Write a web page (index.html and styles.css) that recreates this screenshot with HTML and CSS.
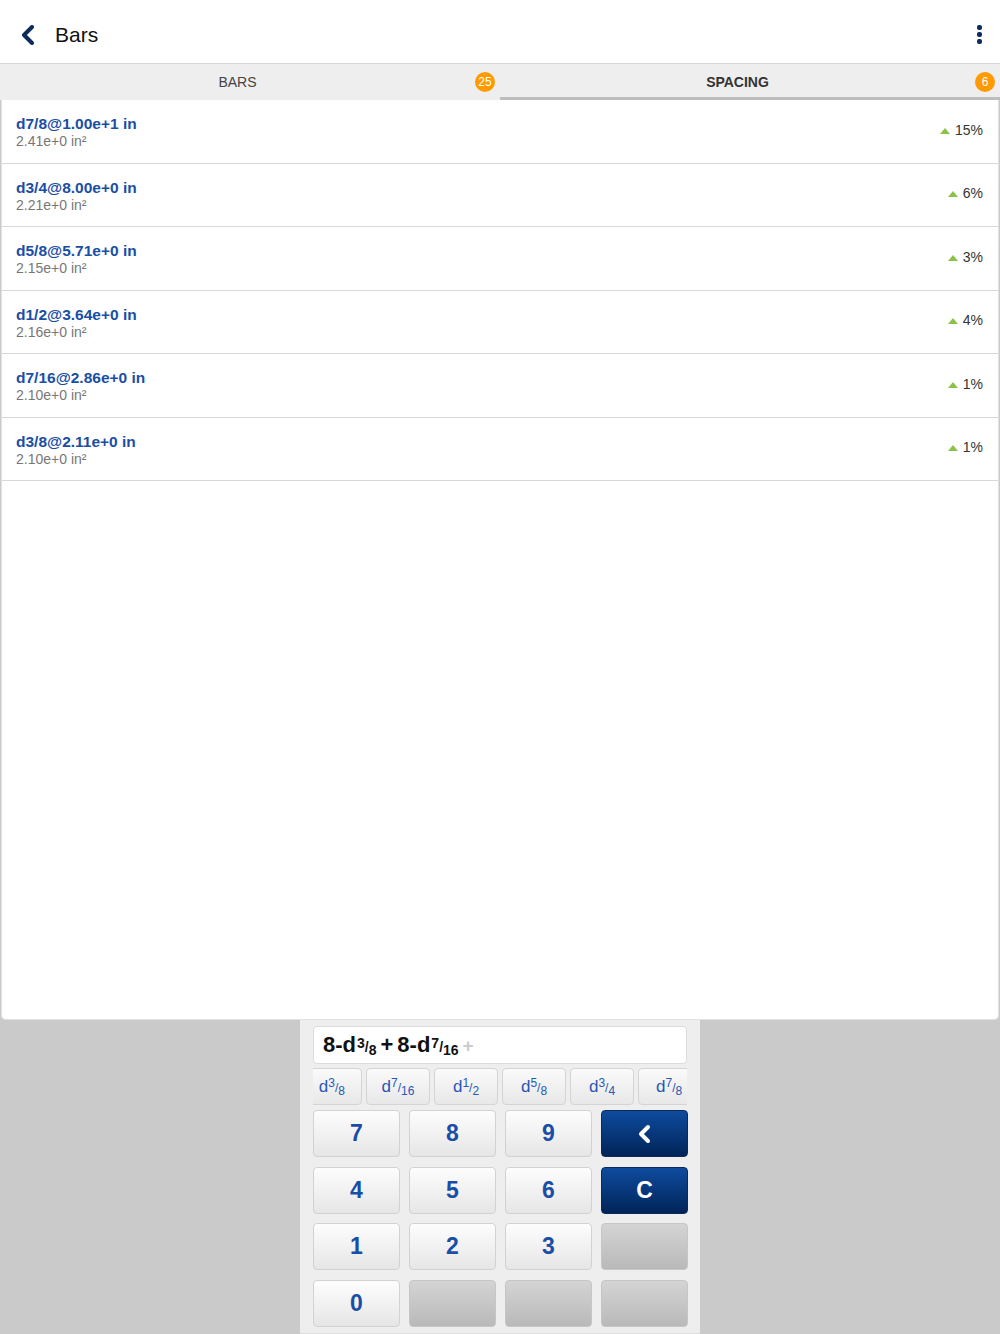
FILE: index.html
```html
<!DOCTYPE html>
<html lang="en">
<head>
    <meta charset="UTF-8">
    <title>Bars</title>
    <meta name="viewport" content="width=device-width, initial-scale=1.0">
    <link rel="stylesheet" href="styles.css">
</head>
<body>
<div class="screen">
    <div class="header">
        <svg class="back" width="16" height="20" viewBox="0 0 16 20">
            <path d="M12 2 L4 10 L12 18" fill="none" stroke="#0d2c5c" stroke-width="4" stroke-linecap="round" stroke-linejoin="round"/>
        </svg>
        <div class="title">Bars</div>
        <div class="kebab">
            <span></span><span></span><span></span>
        </div>
    </div>

    <div class="tabs">
        <div class="tab"><span class="label">BARS</span><span class="badge">25</span></div>
        <div class="tab active"><span class="label">SPACING</span><span class="badge">6</span></div>
    </div>

    <div class="content">
        <div class="list">
            <div class="row">
                <div class="info">
                    <div class="name">d7/8@1.00e+1 in</div>
                    <div class="area">2.41e+0 in²</div>
                </div>
                <div class="delta"><span class="up"></span>15%</div>
            </div>
            <div class="row">
                <div class="info">
                    <div class="name">d3/4@8.00e+0 in</div>
                    <div class="area">2.21e+0 in²</div>
                </div>
                <div class="delta"><span class="up"></span>6%</div>
            </div>
            <div class="row">
                <div class="info">
                    <div class="name">d5/8@5.71e+0 in</div>
                    <div class="area">2.15e+0 in²</div>
                </div>
                <div class="delta"><span class="up"></span>3%</div>
            </div>
            <div class="row">
                <div class="info">
                    <div class="name">d1/2@3.64e+0 in</div>
                    <div class="area">2.16e+0 in²</div>
                </div>
                <div class="delta"><span class="up"></span>4%</div>
            </div>
            <div class="row">
                <div class="info">
                    <div class="name">d7/16@2.86e+0 in</div>
                    <div class="area">2.10e+0 in²</div>
                </div>
                <div class="delta"><span class="up"></span>1%</div>
            </div>
            <div class="row">
                <div class="info">
                    <div class="name">d3/8@2.11e+0 in</div>
                    <div class="area">2.10e+0 in²</div>
                </div>
                <div class="delta"><span class="up"></span>1%</div>
            </div>
        </div>

        <div class="keypad">
            <div class="expr">
                <span>8-d<span class="frac"><sup>3</sup>/<sub>8</sub></span><span class="op">+</span>8-d<span class="frac"><sup>7</sup>/<sub>16</sub></span><span class="hint">+</span></span>
            </div>
            <div class="sizes">
                <div class="strip">
                    <div class="size"><span>d<span class="frac"><sup>3</sup>/<sub>8</sub></span></span></div>
                    <div class="size"><span>d<span class="frac"><sup>7</sup>/<sub>16</sub></span></span></div>
                    <div class="size"><span>d<span class="frac"><sup>1</sup>/<sub>2</sub></span></span></div>
                    <div class="size"><span>d<span class="frac"><sup>5</sup>/<sub>8</sub></span></span></div>
                    <div class="size"><span>d<span class="frac"><sup>3</sup>/<sub>4</sub></span></span></div>
                    <div class="size"><span>d<span class="frac"><sup>7</sup>/<sub>8</sub></span></span></div>
                </div>
            </div>
            <div class="keys">
                <div class="key">7</div>
                <div class="key">8</div>
                <div class="key">9</div>
                <div class="key dark">
                    <svg width="14" height="20" viewBox="0 0 14 20">
                        <path d="M10 3 L3 10 L10 17" fill="none" stroke="#fff" stroke-width="4" stroke-linecap="round" stroke-linejoin="round"/>
                    </svg>
                </div>
                <div class="key">4</div>
                <div class="key">5</div>
                <div class="key">6</div>
                <div class="key dark">C</div>
                <div class="key">1</div>
                <div class="key">2</div>
                <div class="key">3</div>
                <div class="key blank"></div>
                <div class="key">0</div>
                <div class="key blank"></div>
                <div class="key blank"></div>
                <div class="key blank"></div>
            </div>
        </div>
    </div>
</div>
</body>
</html>
```

FILE: styles.css
```css
body {
    margin: 0;
    font-family: "Liberation Sans", Arial, sans-serif;
}
.screen {
    width: 1000px;
    height: 1334px;
    display: flex;
    flex-direction: column;
    background-color: #cacaca;
}
.header {
    height: 64px;
    box-sizing: border-box;
    background-color: #fff;
    border-bottom: 1px solid #d6d6d6;
    display: flex;
    align-items: center;
    padding: 6px 18px 0 20px;
}
.back {
    margin-right: 19px;
}
.title {
    flex: 1;
    font-size: 21px;
    color: #111;
}
.kebab {
    display: flex;
    flex-direction: column;
    gap: 2px;
}
.kebab span {
    width: 5px;
    height: 5px;
    border-radius: 2px;
    background-color: #0d2c5c;
}
.tabs {
    height: 36px;
    display: flex;
    background-color: #eee;
}
.tab {
    flex: 1;
    display: flex;
    align-items: center;
    padding-right: 5px;
    font-size: 14px;
    color: #444;
}
.tab .label {
    flex: 1;
    text-align: center;
}
.tab.active {
    font-weight: bold;
    color: #333;
    box-shadow: inset 0 -3px 0 #bdbdbd;
}
.badge {
    width: 20px;
    height: 20px;
    border-radius: 50%;
    background-color: #ff9a00;
    color: #fff;
    font-size: 12px;
    font-weight: normal;
    display: flex;
    align-items: center;
    justify-content: center;
}
.content {
    flex: 1;
    display: flex;
    flex-direction: column;
}
.list {
    height: 920px;
    flex: none;
    box-sizing: border-box;
    background-color: #fff;
    border: 1px solid #e2e2e2;
    border-top: none;
    border-radius: 0 0 5px 5px;
    margin: 0 1px;
}
.row {
    height: 60.5px;
    border-bottom: 1px solid #d8d8d8;
    display: flex;
    align-items: center;
    padding: 2px 15px 0 14px;
}
.info {
    flex: 1;
}
.name {
    font-size: 15.5px;
    font-weight: bold;
    color: #1a4ea6;
    line-height: 18px;
}
.area {
    font-size: 14px;
    color: #777;
    line-height: 16px;
}
.delta {
    display: flex;
    align-items: center;
    font-size: 14px;
    color: #333;
    margin-top: -5px;
}
.up {
    width: 0;
    height: 0;
    border-left: 5px solid transparent;
    border-right: 5px solid transparent;
    border-bottom: 6px solid #8bc34a;
    margin-right: 5px;
    margin-top: 2px;
}
.keypad {
    width: 400px;
    box-sizing: border-box;
    margin: 0 auto;
    flex: 1;
    background-color: #eee;
    padding: 6px 13px 0;
    border-bottom: 1px solid #ddd;
}
.expr {
    height: 38px;
    box-sizing: border-box;
    background-color: #fff;
    border: 1px solid #dcdcdc;
    border-radius: 4px;
    padding: 0 9px;
    display: flex;
    align-items: center;
    font-size: 22px;
    font-weight: bold;
    color: #111;
}
.frac {
    font-size: 14px;
    margin-left: 1px;
}
.frac sup {
    font-size: 1em;
    vertical-align: 4px;
    line-height: 0;
}
.frac sub {
    font-size: 1em;
    vertical-align: -3px;
    line-height: 0;
}
.expr .op {
    margin: 0 4px;
}
.expr .hint {
    color: #ccc;
    margin-left: 4px;
    font-size: 19px;
}
.sizes {
    margin-top: 4px;
    height: 37px;
    overflow: hidden;
}
.strip {
    display: flex;
    gap: 4px;
    margin-left: -15px;
}
.size {
    flex: none;
    width: 64px;
    height: 37px;
    box-sizing: border-box;
    border: 1px solid #d4d4d4;
    border-radius: 4px;
    background: linear-gradient(#fafafa, #e8e8e8);
    display: flex;
    align-items: center;
    justify-content: center;
    font-size: 17px;
    color: #2758b3;
}
.size .frac {
    font-size: 12px;
    margin-left: 0;
}
.size .frac sup {
    vertical-align: 5px;
}
.size:first-child {
    justify-content: flex-end;
    padding-right: 16px;
}
.size:last-child {
    justify-content: flex-start;
    padding-left: 17px;
}
.keys {
    margin-top: 5px;
    display: grid;
    grid-template-columns: repeat(4, 87px);
    grid-auto-rows: 47px;
    gap: 9.5px 9px;
}
.key {
    box-sizing: border-box;
    border: 1px solid #d2d2d2;
    border-radius: 4px;
    background: linear-gradient(#fdfdfd, #e6e6e6);
    display: flex;
    align-items: center;
    justify-content: center;
    font-size: 23px;
    font-weight: bold;
    color: #1a4ea6;
}
.key.dark {
    border-color: #0b2a5a;
    background: linear-gradient(#0e4b9e, #012458);
    color: #fff;
}
.key.blank {
    border-color: #c6c6c6;
    background: linear-gradient(#d4d4d4, #b9b9b9);
}
```
